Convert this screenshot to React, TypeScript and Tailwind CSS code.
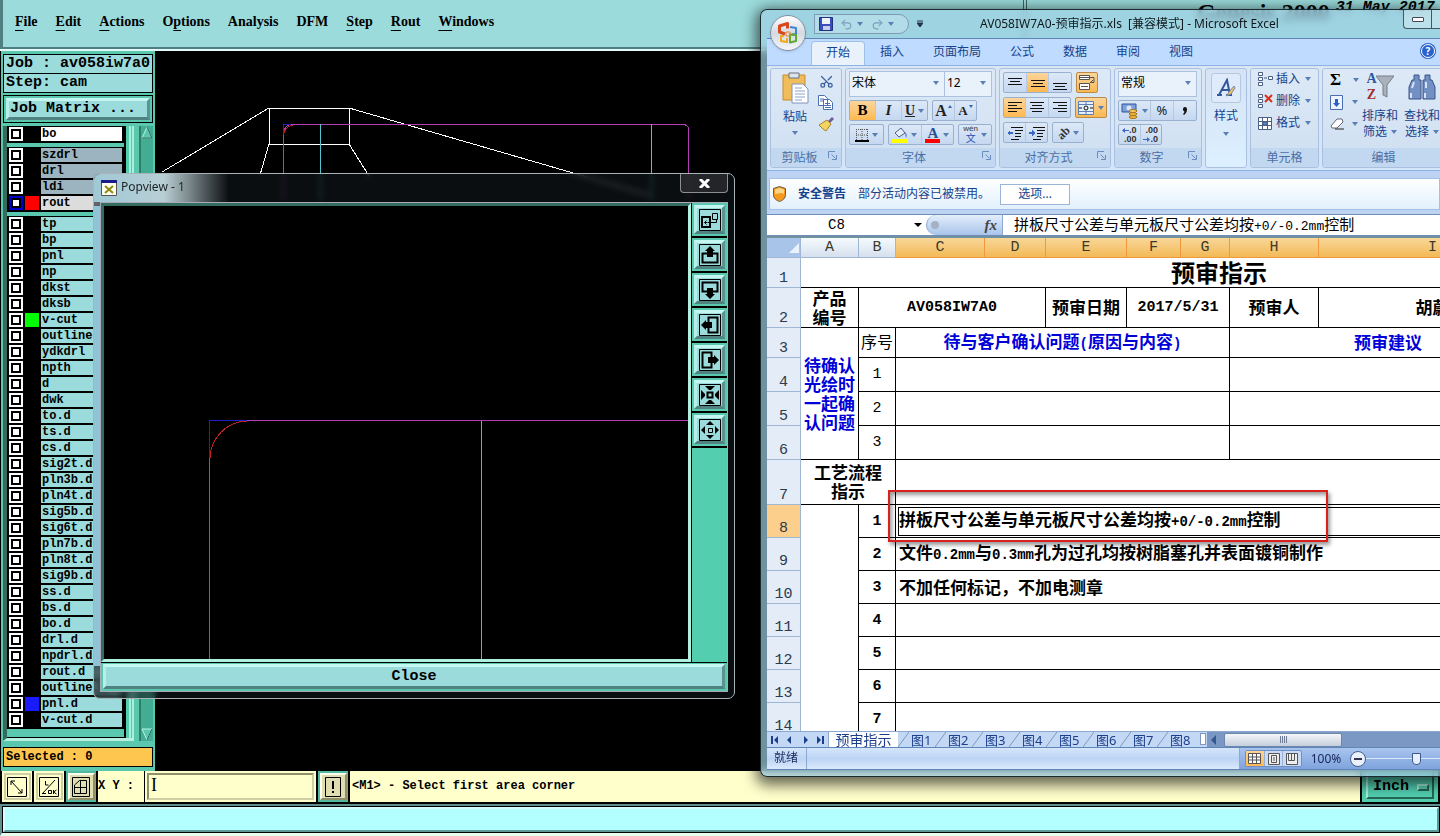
import type { ReactNode } from "react";
import { Redo2, Scissors, Undo2 } from "lucide-react";

const MENUS: [string, string, string][] = [
  ["", "F", "ile"],
  ["", "E", "dit"],
  ["", "A", "ctions"],
  ["O", "p", "tions"],
  ["Analysis", "", ""],
  ["DFM", "", ""],
  ["", "S", "tep"],
  ["", "R", "out"],
  ["", "W", "indows"],
];

type Layer = { name: string; tone?: string; swatch?: string; active?: boolean };

const LAYER_GROUPS: Layer[][] = [
  [{ name: "bo", tone: "bg-white" }],
  [
    { name: "szdrl", tone: "bg-[#9bb4bf]" },
    { name: "drl", tone: "bg-[#9bb4bf]" },
    { name: "ldi", tone: "bg-[#9bb4bf]" },
    { name: "rout", tone: "bg-[#dcdcdc]", swatch: "bg-[#ff0000]", active: true },
  ],
  [
    ..."tp bp pnl np dkst dksb".split(" ").map((name) => ({ name })),
    { name: "v-cut", swatch: "bg-[#00ff00]" },
    ..."outline ydkdrl npth d dwk to.d ts.d cs.d sig2t.d pln3b.d pln4t.d sig5b.d sig6t.d pln7b.d pln8t.d sig9b.d ss.d bs.d bo.d drl.d npdrl.d rout.d outline.d"
      .split(" ")
      .map((name) => ({ name })),
    { name: "pnl.d", swatch: "bg-[#1a1aff]" },
    { name: "v-cut.d" },
  ],
];

const mono = "font-['Liberation_Mono',monospace] font-bold text-black";
const bevel = "border-[3px] border-t-[#c4f7f2] border-l-[#b4f0ea] border-r-[#5a9391] border-b-[#4f8280] bg-[#9bdbdb]";

/* ---------- Genesis ---------- */

function MenuBar() {
  return (
    <header className="flex h-[51px] shrink-0 border-b-2 border-[#e2fbfa] bg-[#9bdbdb]">
      <div className="flex flex-1 border-l-[3px] border-b-2 border-[#4f7f80]">
        <nav className="flex h-11 items-center gap-[18px] pl-3 font-['Liberation_Serif',serif] text-[14px] font-bold text-black">
          {MENUS.map(([a, u, b]) => (
            <button key={a + u + b} className="leading-5">
              {a}
              <span className="underline underline-offset-4">{u}</span>
              {b}
            </button>
          ))}
        </nav>
      </div>
      <div className="flex w-[417px] gap-[6px] border-l-4 border-double border-[#3f6463] pl-[170px] text-black">
        <span className="font-['Liberation_Serif',serif] text-[24px] leading-6 font-bold whitespace-nowrap">Genesis 2000</span>
        <span className="font-['Liberation_Mono',monospace] text-[15px] leading-4 font-bold whitespace-nowrap italic">31 May 2017</span>
      </div>
    </header>
  );
}

function LayerRow({ layer }: { layer: Layer }) {
  return (
    <label className="flex h-4 items-center gap-[2px] pl-[2px]">
      <input
        type="checkbox"
        className={`size-[14px] shrink-0 appearance-none border-2 bg-white shadow-[inset_0_0_0_2px_#000] ${
          layer.active ? "border-[#0000c8]" : "border-white"
        }`}
      />
      <span className={`size-[14px] shrink-0 ${layer.swatch ?? ""}`} />
      <span className={`h-[14px] flex-1 pl-px text-[12px] leading-[14px] ${layer.tone ?? "bg-[#9bdbdb]"}`}>{layer.name}</span>
    </label>
  );
}

function Sidebar() {
  return (
    <aside className={`flex w-[155px] shrink-0 flex-col border-l border-black bg-[#5ac8ae] px-[2px] pt-[3px] pb-1 ${mono}`}>
      <div className="h-5 border border-black bg-[#9bdbdb] pl-[2px] text-[15px] leading-[18px] whitespace-nowrap">Job : av058iw7a0</div>
      <div className="-mt-px h-5 border border-black bg-[#9bdbdb] pl-[2px] text-[15px] leading-[18px]">Step: cam</div>
      <div className="mt-[2px] border border-black bg-[#5ac8ae] p-[2px]">
        <button className={`block h-[22px] w-full pl-px text-left text-[15px] leading-4 ${bevel}`}>Job Matrix ...</button>
      </div>
      <div className="mt-[3px] flex flex-1 gap-[5px]">
        <div className="flex flex-1 border-b-[3px] border-l-4 border-b-[#b8f0e0] border-l-[#346c5f] bg-[#53cfb0]">
          <div className="flex w-[119px] flex-col gap-1 border-r-2 border-b border-black bg-[#5ac8ae]">
            {LAYER_GROUPS.map((group, i) => (
              <div key={i} className="bg-black pr-[2px] pb-px">
                {group.map((layer) => (
                  <LayerRow key={layer.name} layer={layer} />
                ))}
              </div>
            ))}
          </div>
          <div className="ml-[3px] w-[5px] border-x-2 border-[#a6f0de] bg-[#5ac8ae]" />
        </div>
        <div className="flex w-[14px] flex-col justify-between border-l-2 border-[#2f7e6b] bg-[#43ad94]">
          <svg width="12" height="13">
            <path d="M6 1 1 12h10z" fill="#5ac8ae" stroke="#b0f5e4" />
            <path d="M6 1l5 11H1" fill="none" stroke="#245f52" />
          </svg>
          <svg width="12" height="13">
            <path d="M1 1h10L6 12z" fill="#5ac8ae" stroke="#b0f5e4" />
            <path d="M11 1 6 12" stroke="#245f52" />
          </svg>
        </div>
      </div>
      <div className="mt-[6px] h-5 border border-black bg-[#ffc64f] pl-[2px] text-[12px] leading-[18px]">Selected : 0</div>
    </aside>
  );
}

function Canvas() {
  return (
    <svg className="min-w-0 flex-1 bg-black" height="100%" fill="none" shapeRendering="crispEdges">
      <g stroke="#fff">
        <path d="M114 57h80v36h-80zM114 57 7 121M114 93l-9 31M194 57l300 87M194 93l20 32" />
      </g>
      <path d="M128.5 150V84a11 11 0 0 1 6-10.500H530l3.500 3V150" stroke="#b43cb4" />
      <path d="M128.500 82v-8.500H136" stroke="#2020c8" />
      <path d="M128.500 84a11 11 0 0 1 9-10" stroke="#c02020" />
      <path d="M165.500 73v80M496.500 73v80" stroke="#4fc3d0" />
    </svg>
  );
}

function CreamButton({ children, on, label }: { children: ReactNode; on?: boolean; label: string }) {
  return (
    <button
      aria-label={label}
      className={`flex w-8 items-center justify-center border-r-2 border-black ${on ? "bg-[#53b89f]" : "bg-[#ffffcc]"}`}
    >
      <span
        className={`flex size-[27px] items-center justify-center border-2 ${
          on ? "border-t-[#fffff0] border-l-[#fffff0] border-r-[#8f8f6a] border-b-[#8f8f6a] bg-[#e0deb0]" : "border-[#cfcfa4]"
        }`}
      >
        {children}
      </span>
    </button>
  );
}

function CommandBar() {
  return (
    <div className={`flex h-[33px] shrink-0 border-b-2 border-l-2 border-black bg-[#ffffcc] text-[12px] ${mono}`}>
      <CreamButton label="Zoom area">
        <svg width="20" height="20" fill="none" stroke="#000">
          <path d="M.5.500h19v19H.500zM4 4l11 12M4 8V4h4M15 12v4h-4" />
        </svg>
      </CreamButton>
      <CreamButton label="Snap">
        <svg width="20" height="20" fill="none" stroke="#000">
          <path d="M.5.500h19v19H.500zM3 17 16 3M6.500 4v4h3M9.500 13.500h3v3h-3zM14.500 13v4M17.500 13l-3 2 3 2M3 16.500h4" />
        </svg>
      </CreamButton>
      <CreamButton label="Grid" on>
        <svg width="18" height="20" fill="none" stroke="#000">
          <path d="M.5.500h17v19H.500zM2.500 8l5-4.500h7v13h-12zM2.500 10.500h12M8.500 3.500v13" />
        </svg>
      </CreamButton>
      <label htmlFor="xy" className="w-[46px] leading-[31px] whitespace-nowrap">
        X Y :
      </label>
      <div className="flex w-[174px] border-r-2 border-l border-black p-[2px]">
        <input
          id="xy"
          className="w-full border-2 border-t-[#8f8f6a] border-l-[#8f8f6a] border-r-[#cfcfa4] border-b-[#cfcfa4] bg-[#ffffcc] px-[2px] pb-1 font-['Liberation_Serif',serif] text-[18px] leading-5 font-normal outline-none"
          defaultValue="I"
        />
      </div>
      <CreamButton label="Alert" on>
        <svg width="16" height="20" fill="none" stroke="#000">
          <path d="M.5.500h15v19H.500z" />
          <path d="M8 4v8M8 14v2" strokeWidth="2" />
        </svg>
      </CreamButton>
      <p className="flex-1 pl-[2px] leading-[31px]">&lt;M1&gt; - Select first area corner</p>
      <div className="flex w-20 border-x-2 border-black bg-[#53cfb0] px-1 pb-[3px]">
        <button className="flex flex-1 items-center gap-2 border-2 border-t-[#a6f0de] border-l-[#a6f0de] border-r-[#256554] border-b-[#256554] pt-1 pl-[5px] text-[15px] leading-5">
          Inch
          <span className="h-[7px] w-3 border-2 border-t-[#a6f0de] border-l-[#a6f0de] border-r-[#256554] border-b-[#256554]" />
        </button>
      </div>
    </div>
  );
}

/* ---------- Popview window ---------- */

const POP_ICONS: [string, ReactNode][] = [
  ["Zoom window", <><path d="M3 8h8v10H3z" fill="none" stroke="#000" strokeWidth="2" /><path d="M13.500 4.500h5v6h-5zM17.500 10v3.500H9M5.500 13.500h3M7.500 11.500l-2 2 2 2" fill="none" stroke="#000" /></>],
  ["Pan up", <><path d="M8 9.500H3.500v9h15v-9H14" fill="none" stroke="#000" strokeWidth="2" /><path d="M11 2l5 5h-2v6H8V7H6z" /></>],
  ["Pan down", <><path d="M8 12.500H3.500v-9h15v9H14" fill="none" stroke="#000" strokeWidth="2" /><path d="M11 20l5-5h-2V9H8v6H6z" /></>],
  ["Pan left", <><path d="M9.500 8V3.500h9v15h-9V14" fill="none" stroke="#000" strokeWidth="2" /><path d="M2 11l5-5v2h6v6H7v2z" /></>],
  ["Pan right", <><path d="M12.500 8V3.500h-9v15h9V14" fill="none" stroke="#000" strokeWidth="2" /><path d="M20 11l-5-5v2H9v6h6v2z" /></>],
  ["Zoom in", <><path d="M8.500 8.500h5v5h-5z" fill="none" stroke="#000" strokeWidth="2" /><path d="M6 2h10l-4 4h-2zM6 20h10l-4-4h-2zM2 6v10l4-4v-2zM20 6v10l-4-4v-2z" /></>],
  ["Zoom out", <><path d="M9.500 9.500h4v4h-4z" fill="none" stroke="#000" /><path d="M11 2l4 4H7zM11 20l4-4H7zM2 11l4-4v8zM20 11l-4-4v8z" /></>],
];

function Popview() {
  return (
    <section className="absolute top-[173px] left-[93px] flex h-[526px] w-[642px] flex-col rounded-[7px] border border-[#a9b4b8] bg-[#10171a]/60 p-[6px] pt-0 backdrop-blur-[3px]">
      <div className="absolute inset-y-8 left-0 w-[6px] bg-[#8fc3d6]" />
      <header className="-mx-[6px] flex h-7 shrink-0 items-start rounded-t-[6px] bg-[linear-gradient(90deg,#9fc9d6_0,#b9ced4_70px,#7c898d_95px,#10171a00_135px)] pl-[7px]">
        <svg width="16" height="16" className="mt-[6px]">
          <path d="M.5.500h15v15H.500z" fill="#fffff0" stroke="#555" />
          <path d="M0 0h16v3H0z" fill="#1c1c8a" />
          <path d="M4 6l8 7M12 6l-8 7" stroke="#8c8c10" strokeWidth="2" />
        </svg>
        <h2 className="pt-[5px] pl-1 font-['Noto_Sans',sans-serif] text-[12px] leading-4 text-[#1b2326]">Popview - 1</h2>
        <button
          aria-label="Close window"
          className="mr-[6px] ml-auto flex h-[19px] w-12 items-center justify-center rounded-b-[4px] border border-t-0 border-[#8a9092] bg-[#333638]/60 text-white"
        >
          <svg width="11" height="9" stroke="#fff" strokeWidth="3">
            <path d="M1 0l9 9M10 0L1 9" />
          </svg>
        </button>
      </header>
      <div className="flex min-h-0 flex-1 flex-col border border-[#aab] bg-black">
        <div className="flex min-h-0 flex-1">
          <div className="flex flex-1 border-[3px] border-t-[#346c5f] border-r-[#b0f0e0] border-b-[#b0f0e0] border-l-[#346c5f] bg-black">
            <svg width="100%" height="100%" fill="none" shapeRendering="crispEdges">
              <path d="M105.500 460V252M143 214.500h481" stroke="#b43cb4" />
              <path d="M105.500 252v-37.500H143" stroke="#2020c8" />
              <path d="M106 252a38 38 0 0 1 37-37" stroke="#c02020" />
              <path d="M377.500 215v245" stroke="#5fb4cc" />
            </svg>
          </div>
          <div className="flex w-9 flex-col border-l border-black bg-[#53cfb0]">
            {POP_ICONS.map(([label, icon]) => (
              <div key={label} className="flex h-[35px] border-b-2 border-black bg-[#5ac8ae] p-[2px]">
                <button aria-label={label} className={`flex flex-1 items-center justify-center ${bevel}`}>
                  <svg width="22" height="22">
                    <path d="M.5.500h21v21H.500z" fill="none" stroke="#000" />
                    {icon}
                  </svg>
                </button>
              </div>
            ))}
          </div>
        </div>
        <div className="border-t border-black bg-[#5ac8ae] px-[2px] pt-px pb-[2px]">
          <button className={`block h-[25px] w-full text-[15px] leading-4 ${bevel} ${mono}`}>Close</button>
        </div>
      </div>
    </section>
  );
}

/* ---------- Excel window ---------- */

function Caret({ className = "" }: { className?: string }) {
  return (
    <svg width="6" height="4" className={`shrink-0 ${className}`}>
      <path d="M0 0h6L3 4z" fill="#5a7fb5" />
    </svg>
  );
}

function Lines({ rows }: { rows: [number, number][] }) {
  return (
    <svg width="16" height="16" stroke="#111" strokeWidth="1" shapeRendering="crispEdges">
      {rows.map(([y, w]) => (
        <path key={y} d={`M${(16 - w) / 2} ${y + 0.5}h${w}`} />
      ))}
    </svg>
  );
}

function Group({ title, launcher, className, children }: { title: string; launcher?: boolean; className: string; children: ReactNode }) {
  return (
    <section className={`flex shrink-0 flex-col overflow-hidden rounded-[3px] border border-[#a9c1de] bg-linear-to-b from-[#dde9f6] to-[#cfdff1] ${className}`}>
      <div className="min-h-0 flex-1">{children}</div>
      <footer className="flex h-[19px] items-center bg-[#c1d8f0] text-[12px] leading-4 text-[#4a6fa5]">
        <span className="flex-1 text-center">{title}</span>
        {launcher && (
          <svg width="9" height="9" className="mr-1 mb-1" fill="none" stroke="#6a8cbc">
            <path d="M.5 7V.500H7M3.500 3.500l4 4M8.500 4v4.500H4" />
          </svg>
        )}
      </footer>
    </section>
  );
}

const strip = "flex h-[21px] items-stretch rounded-[2px] border border-[#9ab0cf] bg-linear-to-b from-[#dce8f7] to-[#c5d8f0] divide-x divide-[#b4c8e2]";
const cell = "flex flex-1 items-center justify-center gap-[3px]";
const lit = "bg-linear-to-b from-[#fcd59b] to-[#fdb950]";

function ClipboardGroup() {
  return (
    <Group title="剪贴板" launcher className="w-[72px]">
      <div className="flex pt-[3px] pl-[9px]">
        <button className="flex w-[30px] flex-col items-center text-[12px] leading-4 text-[#15428b]">
          <svg width="28" height="32">
            <path d="M2 3h22v25H2z" fill="#f0bd5a" stroke="#c68d2c" />
            <path d="M8 1h10v5H8z" fill="#dfe3ea" stroke="#666f80" />
            <path d="M11 12h11l5 5v14H11z" fill="#fff" stroke="#7e93b8" />
            <path d="M14 16h7M14 19h10M14 22h10M14 25h10M14 28h7" stroke="#8ba3cb" />
          </svg>
          <span className="mt-[5px]">粘贴</span>
          <Caret className="mt-[6px]" />
        </button>
        <div className="flex flex-col items-center gap-[6px] pt-[2px] pl-[8px]">
          <Scissors size={15} color="#3a5f9f" strokeWidth={2} className="-rotate-90" />
          <svg width="16" height="15" fill="#fff" stroke="#4a6fb0">
            <path d="M.5.500h6l3 3v7h-9zM5.500 4.500h6l3 3v7h-9z" />
            <path d="M2 4h4M2 6h3M7 8.500h5M7 10.500h6M7 12.500h6" />
          </svg>
          <svg width="16" height="16">
            <path d="M10 5l4-4 2 2-4 4z" fill="#6c5a9c" />
            <path d="M1 9l8-5 4 4-5 7-3-2z" fill="#f3d463" stroke="#a98424" />
          </svg>
        </div>
      </div>
    </Group>
  );
}

const combo = "appearance-none bg-[#e9f1fb] text-[12px] leading-4 text-black outline-none";

function Combo({ value, label, className }: { value: string; label: string; className: string }) {
  return (
    <div className={`flex h-[26px] items-center border border-[#abc1de] bg-[#e9f1fb] pr-[5px] pb-[2px] pl-[2px] ${className}`}>
      <select aria-label={label} className={`min-w-0 flex-1 ${combo}`}>
        <option>{value}</option>
      </select>
      <Caret />
    </div>
  );
}

function FontGroup() {
  return (
    <Group title="字体" launcher className="w-[151px]">
      <div className="flex flex-col gap-[3px] px-[3px] pt-[2px]">
        <div className="flex">
          <Combo label="字体" value="宋体" className="w-24" />
          <Combo label="字号" value="12" className="-ml-px flex-1" />
        </div>
        <div className="flex gap-1 font-['Liberation_Serif',serif] text-[#222]">
          <div className={`w-[79px] ${strip}`}>
            <button className={`${cell} ${lit} text-[15px] font-bold text-black`}>B</button>
            <button className={`${cell} text-[15px] font-bold italic`}>I</button>
            <button className={`${cell} w-3 text-[14px] font-bold`}>
              <span className="underline">U</span>
              <Caret />
            </button>
          </div>
          <div className={`w-[45px] ${strip}`}>
            <button aria-label="增大字号" className={`${cell} gap-px text-[16px] leading-4 font-bold`}>
              A
              <svg width="4" height="12" fill="#3a66a8"><path d="M0 3l2-3 2 3z" /></svg>
            </button>
            <button aria-label="减小字号" className={`${cell} gap-px text-[13px] leading-4 font-bold`}>
              A
              <svg width="4" height="12" fill="#3a66a8"><path d="M0 0h4L2 3z" /></svg>
            </button>
          </div>
        </div>
        <div className="flex gap-1">
          <div className={`w-[35px] ${strip}`}>
            <button aria-label="边框" className={cell}>
              <svg width="14" height="14" stroke="#555" fill="none">
                <path d="M1 1.500h12M1 7h12M1.500 1v11M7 1v11M12.500 1v11" strokeDasharray="1 1" />
                <path d="M0 13h14" stroke="#000" strokeWidth="2" />
              </svg>
              <Caret />
            </button>
          </div>
          <div className={`w-[67px] ${strip}`}>
            <button aria-label="填充颜色" className={cell}>
              <svg width="16" height="16">
                <path d="M3 6l6-5 4 5-6 4z" fill="#e6eefb" stroke="#4a5f86" />
                <path d="M13 5c2 2 2 4 1 6z" fill="#3a66c8" />
                <path d="M0 12h16v4H0z" fill="#ff0" />
              </svg>
              <Caret />
            </button>
            <button aria-label="字体颜色" className={cell}>
              <span className="border-b-4 border-[#f00] px-[2px] font-['Liberation_Serif',serif] text-[15px] leading-3 font-bold text-[#2a4f94]">A</span>
              <Caret />
            </button>
          </div>
          <div className={`w-[34px] ${strip}`}>
            <button className={cell}>
              <span className="flex flex-col items-center font-['Liberation_Sans','Noto_Sans_CJK_SC',sans-serif] text-[#2a4fb4]">
                <span className="text-[8px] leading-[8px] text-[#333]">wén</span>
                <span className="text-[10px] leading-[11px]">文</span>
              </span>
              <Caret />
            </button>
          </div>
        </div>
      </div>
    </Group>
  );
}

function Indent({ flip }: { flip?: boolean }) {
  return (
    <svg width="16" height="16" stroke="#111" shapeRendering="crispEdges">
      <path d="M4 2.500h12M8 5.500h8M8 8.500h6M8 11.500h6M4 14.500h8" />
      <path d={flip ? "M6 8 3 5v2H0v2h3v2z" : "M0 8l3-3v2h3v2H3v2z"} fill="#3a66c8" stroke="none" />
    </svg>
  );
}

function AlignGroup() {
  return (
    <Group title="对齐方式" launcher className="w-[112px]">
      <div className="flex flex-col gap-1 px-[3px] pt-[3px]">
        <div className="flex gap-1">
          <div className={`w-[69px] ${strip}`}>
            <button aria-label="顶端对齐" className={cell}><Lines rows={[[3, 14], [6, 10], [9, 14]]} /></button>
            <button aria-label="垂直居中" className={`${cell} ${lit}`}><Lines rows={[[5, 14], [8, 10], [11, 14]]} /></button>
            <button aria-label="底端对齐" className={cell}><Lines rows={[[8, 14], [11, 10], [14, 14]]} /></button>
          </div>
          <button aria-label="自动换行" className={`flex h-[21px] w-[22px] items-center justify-center rounded-[2px] border border-[#b98a4a] ${lit}`}>
            <svg width="18" height="17" fill="#fff" stroke="#555">
              <path d="M1.500 1.500h10v4h-10zM1.500 9.500h10v6h-10zM3 12.500h7" />
              <path d="M1 3.500h15v5h-3M15 6l-3 3" fill="none" />
            </svg>
          </button>
        </div>
        <div className="flex gap-1">
          <div className={`w-[69px] ${strip}`}>
            <button aria-label="左对齐" className={`${cell} ${lit}`}>
              <svg width="16" height="16" stroke="#111" shapeRendering="crispEdges"><path d="M1 2.500h14M1 5.500h9M1 8.500h14M1 11.500h9" /></svg>
            </button>
            <button aria-label="居中" className={cell}><Lines rows={[[2, 14], [5, 10], [8, 14], [11, 10]]} /></button>
            <button aria-label="右对齐" className={cell}>
              <svg width="16" height="16" stroke="#111" shapeRendering="crispEdges"><path d="M1 2.500h14M6 5.500h9M1 8.500h14M6 11.500h9" /></svg>
            </button>
          </div>
          <button aria-label="合并后居中" className={`flex h-[21px] w-8 items-center justify-center gap-1 rounded-[2px] border border-[#b98a4a] ${lit}`}>
            <svg width="16" height="16" fill="#e6effb" stroke="#5a7fb5">
              <path d="M.5 1.500h15v13H.500zM.5 4.500h15M.5 11.500h15M8 1v3M8 12v3" />
              <path d="M1 8h3M12 8h3M6 8a2 2 0 1 0 4 0a2 2 0 1 0-4 0" stroke="#111" fill="none" />
            </svg>
            <Caret />
          </button>
        </div>
        <div className="flex gap-1">
          <div className={`w-[45px] ${strip}`}>
            <button aria-label="减少缩进量" className={cell}><Indent /></button>
            <button aria-label="增加缩进量" className={cell}><Indent flip /></button>
          </div>
          <div className={`w-8 ${strip}`}>
            <button className={cell}>
              <span className="-rotate-45 font-['Liberation_Serif',serif] text-[12px] leading-3 font-bold text-[#333]">ab</span>
              <Caret />
            </button>
          </div>
        </div>
      </div>
    </Group>
  );
}

function NumberGroup() {
  return (
    <Group title="数字" launcher className="w-[88px]">
      <div className="flex flex-col gap-[3px] px-[3px] pt-[2px]">
        <Combo label="数字格式" value="常规" className="w-[79px]" />
        <div className={`w-[79px] ${strip}`}>
          <button aria-label="会计数字格式" className="flex w-8 items-center justify-center gap-1">
            <svg width="17" height="17">
              <path d="M1 2h14v8H1z" fill="#7fa0dc" stroke="#2f5597" />
              <circle cx="8" cy="6" r="2.500" fill="#dce8fa" />
              <ellipse cx="12" cy="15" rx="4" ry="1.500" fill="#f2b73c" stroke="#a8741a" />
              <ellipse cx="12" cy="12" rx="4" ry="1.500" fill="#f2b73c" stroke="#a8741a" />
              <ellipse cx="12" cy="9" rx="4" ry="1.500" fill="#f8cf68" stroke="#a8741a" />
            </svg>
            <Caret />
          </button>
          <button className={`${cell} text-[13px] text-[#222]`}>%</button>
          <button aria-label="千位分隔样式" className={cell}>
            <svg width="6" height="8"><path d="M1 2a2 2 0 1 1 4 0c0 3-1 4-3 6l-1-1c1-1 2-2 1-3C1 4 1 3 1 2z" fill="#111" /></svg>
          </button>
        </div>
        <div className={`w-11 ${strip} font-['Liberation_Sans',sans-serif] text-[9px] leading-[9px] font-bold text-[#333]`}>
          <button className={cell}>
            <span className="flex flex-col items-end">
              <span className="flex items-center">
                <svg width="7" height="5" fill="#3a66c8"><path d="M0 2.500L3 0v2h4v1H3v2z" /></svg>.0
              </span>
              .00
            </span>
          </button>
          <button className={cell}>
            <span className="flex flex-col items-end">
              .00
              <span className="flex items-center">
                <svg width="7" height="5" fill="#3a66c8"><path d="M7 2.500L4 0v2H0v1h4v2z" /></svg>.0
              </span>
            </span>
          </button>
        </div>
      </div>
    </Group>
  );
}

function CellsIcon({ kind }: { kind: number }) {
  return (
    <svg width="16" height="16" fill="#fff" stroke="#4a5f86">
      {kind === 2 ? (
        <>
          <path d="M1.500 2.500h13v12h-13zM1 6.500h14M1 10.500h14M5.500 2v13M10.500 2v13" />
          <path d="M6 7h4v3H6z" fill="#5b85d0" />
        </>
      ) : (
        <>
          <path d="M1.500 1.500h4v3h-4zM1.500 6.500h4v3h-4zM1.500 11.500h4v3h-4z" />
          {kind === 0 ? <path d="M7 7h3M11.500 5.500h4v3h-4z" /> : <path d="M8 2l7 7M15 2l-7 7" stroke="#d8301c" strokeWidth="2" />}
        </>
      )}
    </svg>
  );
}

function Ribbon() {
  return (
    <div className="flex h-[106px] shrink-0 gap-[3px] border-y border-[#8db2e3] bg-linear-to-b from-[#dbe6f4] to-[#d3e5fa] px-[3px] py-[2px]">
      <ClipboardGroup />
      <FontGroup />
      <AlignGroup />
      <NumberGroup />
      <button className="flex w-[42px] shrink-0 flex-col items-center rounded-[3px] border border-[#a9c1de] bg-linear-to-b from-[#d5e3f4] to-[#dcf0ff] pt-1 text-[12px] leading-4 text-[#15428b]">
        <span className="flex h-[30px] w-[30px] items-center justify-center rounded-[3px] border border-[#b4c8e2] bg-[#dfeafa]">
          <svg width="20" height="20">
            <path d="M1 17h5M10 17h6M3 17L11 2l3 15M6 12h7" fill="none" stroke="#33589c" strokeWidth="2" />
            <path d="M18 8l-5 6-3 4 5-2 4-6z" fill="#f0c25a" stroke="#7a8aa8" />
          </svg>
        </span>
        <span className="mt-[5px]">样式</span>
        <Caret className="mt-2" />
      </button>
      <Group title="单元格" className="w-[69px]">
        <div className="flex flex-col gap-[2px] pl-[6px] text-[12px] leading-5 text-[#15428b]">
          {["插入", "删除", "格式"].map((text, i) => (
            <button key={text} className="flex items-center gap-[3px]">
              <CellsIcon kind={i} />
              {text}
              <Caret className="ml-[2px]" />
            </button>
          ))}
        </div>
      </Group>
      <Group title="编辑" className="w-[123px]">
        <div className="flex pt-px pl-[7px] text-[12px] leading-4 text-[#15428b]">
          <div className="flex w-[29px] flex-col gap-[2px]">
            <button aria-label="求和" className="flex h-5 items-center justify-between font-['Liberation_Serif',serif] text-[17px] font-bold text-black">Σ<Caret /></button>
            <button aria-label="填充" className="flex h-5 items-center justify-between pr-px">
              <svg width="13" height="15">
                <path d="M.5.500h12v14H.500z" fill="#eef4fd" stroke="#4a6fb0" />
                <path d="M5 4h3v4h2l-3.500 4L3 8h2z" fill="#2a62cc" />
              </svg>
              <Caret />
            </button>
            <button aria-label="清除" className="flex h-5 items-center justify-between pr-px">
              <svg width="14" height="12">
                <path d="M1 8l6-7h5l1 3-6 6H2z" fill="#fff" stroke="#667" />
                <path d="M5 11h9" stroke="#222" />
              </svg>
              <Caret />
            </button>
          </div>
          <button className="flex w-[42px] flex-col items-center">
            <span className="flex h-[34px] items-center">
              <span className="flex flex-col font-['Liberation_Serif',serif] text-[14px] leading-4 font-bold"><span className="text-[#2f57a0]">A</span><span className="text-[#a03030]">Z</span></span>
              <svg width="18" height="24" className="-ml-px">
                <path d="M0 1h18l-7 9v12l-4-2V10z" fill="#aab1ba" stroke="#777f8a" />
              </svg>
            </span>
            <span className="mt-[4px] whitespace-nowrap">排序和</span>
            <span className="flex items-center gap-1 whitespace-nowrap">筛选<Caret /></span>
          </button>
          <button className="flex w-[42px] flex-col items-center">
            <span className="flex h-[34px] items-center">
              <svg width="28" height="26" fill="#7390c4" stroke="#3a5488">
                <path d="M6 1h5v5h2v19H1V13l3-7h2zM22 1h-5v5h-2v19h12V13l-3-7h-2z" />
                <path d="M3 19v5M6 8l-2 6M17 19v5M18 8v6" stroke="#d5e2f8" strokeWidth="2" />
              </svg>
            </span>
            <span className="mt-[4px] whitespace-nowrap">查找和</span>
            <span className="flex items-center gap-1 whitespace-nowrap">选择<Caret /></span>
          </button>
        </div>
      </Group>
    </div>
  );
}

function OfficeOrb() {
  return (
    <button aria-label="Office" className="absolute top-[5px] left-[9px] flex size-9 items-center justify-center rounded-full border border-[#7f8fa8] bg-linear-to-b from-white via-[#d5d9e0] to-[#f4f6fa] shadow">
      <svg width="24" height="24" fill="none" strokeLinejoin="round">
        <path d="M9 13L3.500 11V5l8-2.500v5" stroke="#d8481c" strokeWidth="3" />
        <path d="M14 6l6 1v6l-4 .500" stroke="#3f86d0" strokeWidth="2" />
        <path d="M8 15H5v5l6 1v-4" stroke="#f0a818" strokeWidth="2" />
        <path d="M14 13.500l6 .500v6l-6 1.500z" stroke="#5fa832" strokeWidth="2" />
        <path d="M10 11h4v4h-4z" stroke="#e8862a" />
      </svg>
    </button>
  );
}

function TitleBar() {
  return (
    <header className="flex h-7 shrink-0 items-center pl-[47px] text-[12px] text-[#10181c]">
      <div className="flex h-5 w-[95px] items-center gap-[5px] rounded-r-full border border-[#7d9cb4] bg-white/20 pl-1">
        <button aria-label="保存">
          <svg width="14" height="14">
            <path d="M.5.500h13v13H.500z" fill="#3b4db8" stroke="#23307c" />
            <path d="M3 1h8v6H3z" fill="#eef2fb" />
            <path d="M4 9h7v4H4z" fill="#c8d0e8" />
          </svg>
        </button>
        <button aria-label="撤消" className="flex items-center gap-1 pl-[2px]"><Undo2 size={13} color="#7f9fbc" strokeWidth={2} /><Caret /></button>
        <button aria-label="恢复" className="flex items-center gap-1 pl-[3px]"><Redo2 size={13} color="#7f9fbc" strokeWidth={2} /><Caret /></button>
      </div>
      <svg width="6" height="8" className="ml-[8px]"><path d="M0 1h6M0 3h6L3 7z" fill="#234" stroke="#234" /></svg>
      <h1 className="flex-1 truncate pl-[57px] whitespace-pre">AV058IW7A0-预审指示.xls  [兼容模式] - Microsoft Excel</h1>
      <div className="flex h-[19px] shrink-0 self-start overflow-hidden rounded-bl-[4px] border border-t-0 border-r-0 border-[#3f5866] bg-white/30">
        <button aria-label="最小化" className="flex w-7 items-center justify-center border-r border-[#3f5866]">
          <span className="h-[5px] w-3 rounded-[1px] border border-[#445] bg-white" />
        </button>
        <button aria-label="最大化" className="w-[8px]" />
      </div>
    </header>
  );
}

function TabStrip() {
  return (
    <nav className="flex h-[27px] shrink-0 items-end gap-px border-t border-[#5f86b8] bg-[#bfdbff] pl-[44px] text-[12px] leading-4 text-[#15428b]">
      {["开始", "插入", "页面布局", "公式", "数据", "审阅", "视图"].map((tab, i) => (
        <button
          key={tab}
          className={`h-[25px] shrink-0 px-[14px] pb-[2px] ${i === 0 ? "-mb-px rounded-t-[4px] border-x border-t border-[#9fc0ea] bg-[#e9f1fb] px-[13px]" : ""}`}
        >
          {tab}
        </button>
      ))}
      <button aria-label="帮助" className="mr-[5px] mb-[7px] ml-auto flex size-[14px] shrink-0 items-center justify-center rounded-full border border-white bg-[#2a62cc] text-[10px] leading-3 font-bold text-white ring-1 ring-[#2a62cc]">
        ?
      </button>
    </nav>
  );
}

function MessageBar() {
  return (
    <div className="shrink-0 bg-[#bcd3f3] pt-[7px] pb-1 pl-[2px]">
      <div className="flex h-8 items-center border border-[#a3c0e4] bg-linear-to-b from-white to-[#e2f0fd] pl-[3px] text-[12px] text-[#15428b]">
        <svg width="13" height="16">
          <path d="M6.500.500l6 2v6c0 4-3 6-6 7-3-1-6-3-6-7v-6z" fill="#f79a1c" stroke="#66594a" />
          <path d="M6.500 2l4.500 1.500V8c-4-2-6 0-9 0V3.500z" fill="#fbd58a" />
        </svg>
        <strong className="ml-[12px]">安全警告</strong>
        <span className="ml-3">部分活动内容已被禁用。</span>
        <button className="ml-[10px] h-[21px] w-[70px] border border-[#9ab5d8] bg-white">选项...</button>
      </div>
    </div>
  );
}

/** Half-width run set between full-width characters. */
function Latin({ children, small }: { children: ReactNode; small?: boolean }) {
  return <span className={`font-['Liberation_Mono',monospace] ${small ? "text-[13px]" : "text-[14px]"}`}>{children}</span>;
}

function FormulaBar() {
  return (
    <div className="flex h-[22px] shrink-0 items-stretch border-y border-[#6f8db5] bg-white text-black">
      <div className="flex w-[159px] shrink-0 items-center pr-1">
        <input aria-label="名称框" defaultValue="C8" className="w-[140px] min-w-0 flex-1 bg-transparent pr-2 text-center font-['Liberation_Mono',monospace] text-[14px] outline-none" />
        <svg width="8" height="5"><path d="M0 0h8L4 4z" /></svg>
      </div>
      <div className="flex w-[77px] shrink-0 items-center justify-between rounded-l-full border-r border-l border-[#8da8cf] bg-linear-to-b from-[#e4eefb] to-[#a9c4ea] pr-[5px] pl-1">
        <span className="size-2 rounded-full bg-[#a5b2c6]" />
        <span className="font-['Liberation_Serif',serif] text-[15px] leading-4 font-bold text-[#444] italic">fx</span>
      </div>
      <p className="overflow-hidden pl-[11px] text-[15px] leading-[19px] whitespace-nowrap">
        拼板尺寸公差与单元板尺寸公差均按<Latin small>+0/-0.2mm</Latin>控制
      </p>
    </div>
  );
}

const COLS = ["w-[58px]", "w-[37px]", "w-[89px]", "w-[61px]", "w-[81px]", "w-[54px]", "w-[49px]", "w-[89px]", "w-[228px]", "w-[90px]"];
const line = "border-r border-b border-black p-0";

function RowHead({ n, h, on }: { n: number; h: string; on?: boolean }) {
  return (
    <th scope="row" className={`border-r border-b border-[#9fb6d4] p-0 align-bottom font-['Liberation_Mono',monospace] text-[15px] leading-4 font-normal text-[#2b3a4d] ${h} ${on ? "bg-[#fcd08c]" : "bg-[#e4ecf7]"}`}>
      {n}
    </th>
  );
}

function Sheet() {
  const steps: [number, ReactNode][] = [
    [9, <>文件<Latin>0.2mm</Latin>与<Latin>0.3mm</Latin>孔为过孔均按树脂塞孔并表面镀铜制作</>],
    [10, "不加任何标记，不加电测章"],
    [11, ""],
    [12, ""],
    [13, ""],
    [14, ""],
  ];
  return (
    <div className="relative mt-[2px] min-h-0 flex-1 overflow-hidden bg-white">
      <table className="w-[870px] table-fixed border-separate border-spacing-0 text-center text-[17px] leading-[19px] text-black">
        <colgroup>
          <col className="w-[34px]" />
          {COLS.map((w, i) => (
            <col key={i} className={w} />
          ))}
        </colgroup>
        <thead>
          <tr className="font-['Liberation_Mono',monospace] text-[15px]">
            <td className="h-5 border-r border-b border-[#9fb6d4] bg-[#a9c4e9] p-0">
              <svg width="12" height="12" className="ml-auto"><path d="M11 1v10H1z" fill="#e9f2fd" /></svg>
            </td>
            {"ABCDEFGHIJ".split("").map((c, i) => (
              <th key={c} scope="col" className={`border-r border-b p-0 leading-[18px] font-normal text-[#3b3a2a] ${i < 2 ? "border-[#9fb6d4] bg-linear-to-b from-[#f6fafe] to-[#d5e0ee]" : "border-[#ee9a3a] bg-linear-to-b from-[#f8d797] to-[#f3b956]"}`}>
                {c}
              </th>
            ))}
          </tr>
        </thead>
        <tbody>
          <tr>
            <RowHead n={1} h="h-[30px]" />
            <td colSpan={10} className="border-b border-black p-0 text-[24px] leading-7 font-bold">预审指示</td>
          </tr>
          <tr className="font-bold">
            <RowHead n={2} h="h-10" />
            <td className={line}>产品<br />编号</td>
            <td colSpan={3} className={`${line} font-['Liberation_Mono',monospace] text-[15px]`}>AV058IW7A0</td>
            <td className={line}>预审日期</td>
            <td colSpan={2} className={`${line} font-['Liberation_Mono',monospace] text-[15px]`}>2017/5/31</td>
            <td className={line}>预审人</td>
            <td className={line}>胡蔚</td>
            <td className={line} />
          </tr>
          <tr className="font-bold text-[#0000d8]">
            <RowHead n={3} h="h-[30px]" />
            <td rowSpan={4} className={`${line} px-[2px]`}>待确认光绘时一起确认问题</td>
            <td className={`${line} text-[16px] font-normal text-black`}>序号</td>
            <td colSpan={5} className={line}>待与客户确认问题<Latin>(</Latin>原因与内容<Latin>)</Latin></td>
            <td colSpan={2} className={line}>预审建议</td>
            <td className={line} />
          </tr>
          {[4, 5, 6].map((n) => (
            <tr key={n}>
              <RowHead n={n} h="h-[34px]" />
              <td className={`${line} font-['Liberation_Mono',monospace] text-[15px]`}>{n - 3}</td>
              <td colSpan={5} className={line} />
              <td colSpan={2} className={line} />
              <td className={line} />
            </tr>
          ))}
          <tr className="font-bold">
            <RowHead n={7} h="h-[45px]" />
            <td colSpan={2} className={line}>工艺流程<br />指示</td>
            <td colSpan={8} className={line} />
          </tr>
          <tr className="font-bold">
            <RowHead n={8} h="h-[33px]" on />
            <td rowSpan={7} className={line} />
            <td className={`${line} font-['Liberation_Mono',monospace] text-[15px]`}>1</td>
            <td colSpan={8} className={`${line} pl-[3px] text-left outline-1 -outline-offset-3 outline-black`}>
              拼板尺寸公差与单元板尺寸公差均按<Latin>+0/-0.2mm</Latin>控制
            </td>
          </tr>
          {steps.map(([n, text]) => (
            <tr key={n} className="font-bold">
              <RowHead n={n} h="h-[33px]" />
              <td className={`${line} font-['Liberation_Mono',monospace] text-[15px]`}>{n - 7}</td>
              <td colSpan={8} className={`${line} pl-[3px] text-left`}>{text}</td>
            </tr>
          ))}
        </tbody>
      </table>
      {/* review mark around row 8 */}
      <div className="pointer-events-none absolute top-[252px] left-[121px] h-[52px] w-[440px] border-2 border-[#d8201c] shadow-[2px_3px_4px_#0006,inset_2px_3px_4px_#0006]" />
    </div>
  );
}

function SheetTabs() {
  return (
    <div className="flex h-4 shrink-0 items-stretch overflow-hidden border-t border-[#8da8cf] bg-[#c3d8f4] text-[14px] leading-4 text-[#1d3f8b]">
      <div className="flex w-[62px] shrink-0 items-center justify-around border-r border-[#8da8cf]">
        {["M0 0h2v8H0zM7 0v8L3 4z", "M5 0v8L1 4z", "M2 0v8l4-4z", "M0 0v8l4-4zM5 0h2v8H5z"].map((d) => (
          <button key={d} aria-label="工作表导航"><svg width="7" height="8" fill="#1d3f8b"><path d={d} /></svg></button>
        ))}
      </div>
      <button className="w-[69px] shrink-0 bg-white leading-[14px]">预审指示</button>
      {[1, 2, 3, 4, 5, 6, 7, 8].map((n) => (
        <button key={n} className="flex w-[37px] shrink-0 items-center text-[13px] leading-[14px]">
          <svg width="12" height="15" className="mr-px"><path d="M0 15 11 0" stroke="#8098bf" /></svg>
          图{n}
        </button>
      ))}
      <span className="mt-px mr-px ml-[6px] h-3 w-[6px] shrink-0 border border-[#8098bf] bg-white" />
      <div className="flex flex-1 items-center bg-[#7b97c4]">
        <svg width="17" height="10" className="shrink-0"><path d="M9 0v10L4 5z" fill="#36568f" /></svg>
        <div className="flex h-[14px] w-[118px] items-center justify-center gap-px rounded-[2px] border border-[#6f87ad] bg-linear-to-b from-[#f4f6f9] to-[#c5cfdd]">
          {[0, 1, 2, 3].map((i) => (
            <span key={i} className="h-[7px] w-px bg-[#6f7d94]" />
          ))}
        </div>
      </div>
    </div>
  );
}

function StatusBar() {
  return (
    <footer className="flex h-[23px] shrink-0 items-stretch overflow-hidden border-y border-[#5f86b8] bg-linear-to-b from-[#d6e6fb] via-[#bcd4f5] to-[#dbe9fc] text-[12px] leading-5 text-[#15265a]">
      <span className="w-10 border-r border-[#8da8cf] pl-[7px]">就绪</span>
      <div className="ml-auto flex w-[201px] items-center border-l border-[#8da8cf] bg-linear-to-b from-[#a9c5ef] to-[#7fa3dc] pl-[5px]">
        <div className="flex h-[17px] w-[57px] shrink-0 divide-x divide-[#9ab0d8] rounded-[2px] border border-[#6f8fc4] bg-[#c9dbf5]">
          <button aria-label="普通" className={`${cell} ${lit}`}>
            <svg width="13" height="11" fill="#fff" stroke="#555"><path d="M.5.500h12v10H.500zM0 4h13M0 7h13M4.500 0v11M8.500 0v11" /></svg>
          </button>
          <button aria-label="页面布局" className={cell}>
            <svg width="12" height="12" fill="#eee" stroke="#555"><path d="M.5.500h11v11H.500zM3.500 2.500h5v7h-5zM5 5h2M5 7h2" /></svg>
          </button>
          <button aria-label="分页预览" className={cell}>
            <svg width="12" height="12" fill="#eee" stroke="#555"><path d="M.5.500h11v11H.500zM2.500.500h3v7h-3zM5.500.500h3v7h-3z" /></svg>
          </button>
        </div>
        <button className="w-12 shrink-0">100%</button>
        <button aria-label="缩小" className="flex size-4 shrink-0 items-center justify-center rounded-full border border-[#445f8f] bg-[#eaf1fb]">
          <span className="h-[2px] w-2 bg-[#335]" />
        </button>
        <input
          aria-label="显示比例"
          type="range"
          defaultValue={50}
          className="h-4 w-[100px] shrink-0 appearance-none bg-[linear-gradient(#dce9fb,#dce9fb)] bg-[length:100%_1px] bg-center bg-no-repeat [&::-webkit-slider-thumb]:h-3 [&::-webkit-slider-thumb]:w-[9px] [&::-webkit-slider-thumb]:appearance-none [&::-webkit-slider-thumb]:rounded-b-[4px] [&::-webkit-slider-thumb]:border [&::-webkit-slider-thumb]:border-[#3f5a8a] [&::-webkit-slider-thumb]:bg-[#e6effc]"
        />
      </div>
    </footer>
  );
}

function ExcelWindow() {
  return (
    <section className="absolute top-[9px] right-0 bottom-[59px] left-[760px] flex flex-col overflow-hidden rounded-l-[7px] border border-r-0 border-[#1c2a30] bg-[#9fd0e4]/70 pb-[6px] pl-[6px] font-['Noto_Sans','Noto_Sans_CJK_SC',sans-serif] shadow-[0_4px_14px_4px_#0009] backdrop-blur-[4px]">
      <TitleBar />
      <TabStrip />
      <Ribbon />
      <MessageBar />
      <FormulaBar />
      <Sheet />
      <SheetTabs />
      <StatusBar />
      <OfficeOrb />
    </section>
  );
}

export default function App() {
  return (
    <main className="relative flex min-h-screen flex-col overflow-hidden bg-black">
      <MenuBar />
      <div className="flex flex-1">
        <Sidebar />
        <Canvas />
      </div>
      <CommandBar />
      <div className="h-8 shrink-0 border-t-2 border-b-[3px] border-l-2 border-t-[#5f8f8f] border-b-[#e8ffee] border-l-[#5f8f8f] bg-black p-px">
        <div className="h-full border-2 border-t-[#d5ffff] border-l-[#d5ffff] border-r-[#5f9696] border-b-[#5f9696] bg-[#b3ffff]" />
      </div>
      <Popview />
      <ExcelWindow />
    </main>
  );
}
